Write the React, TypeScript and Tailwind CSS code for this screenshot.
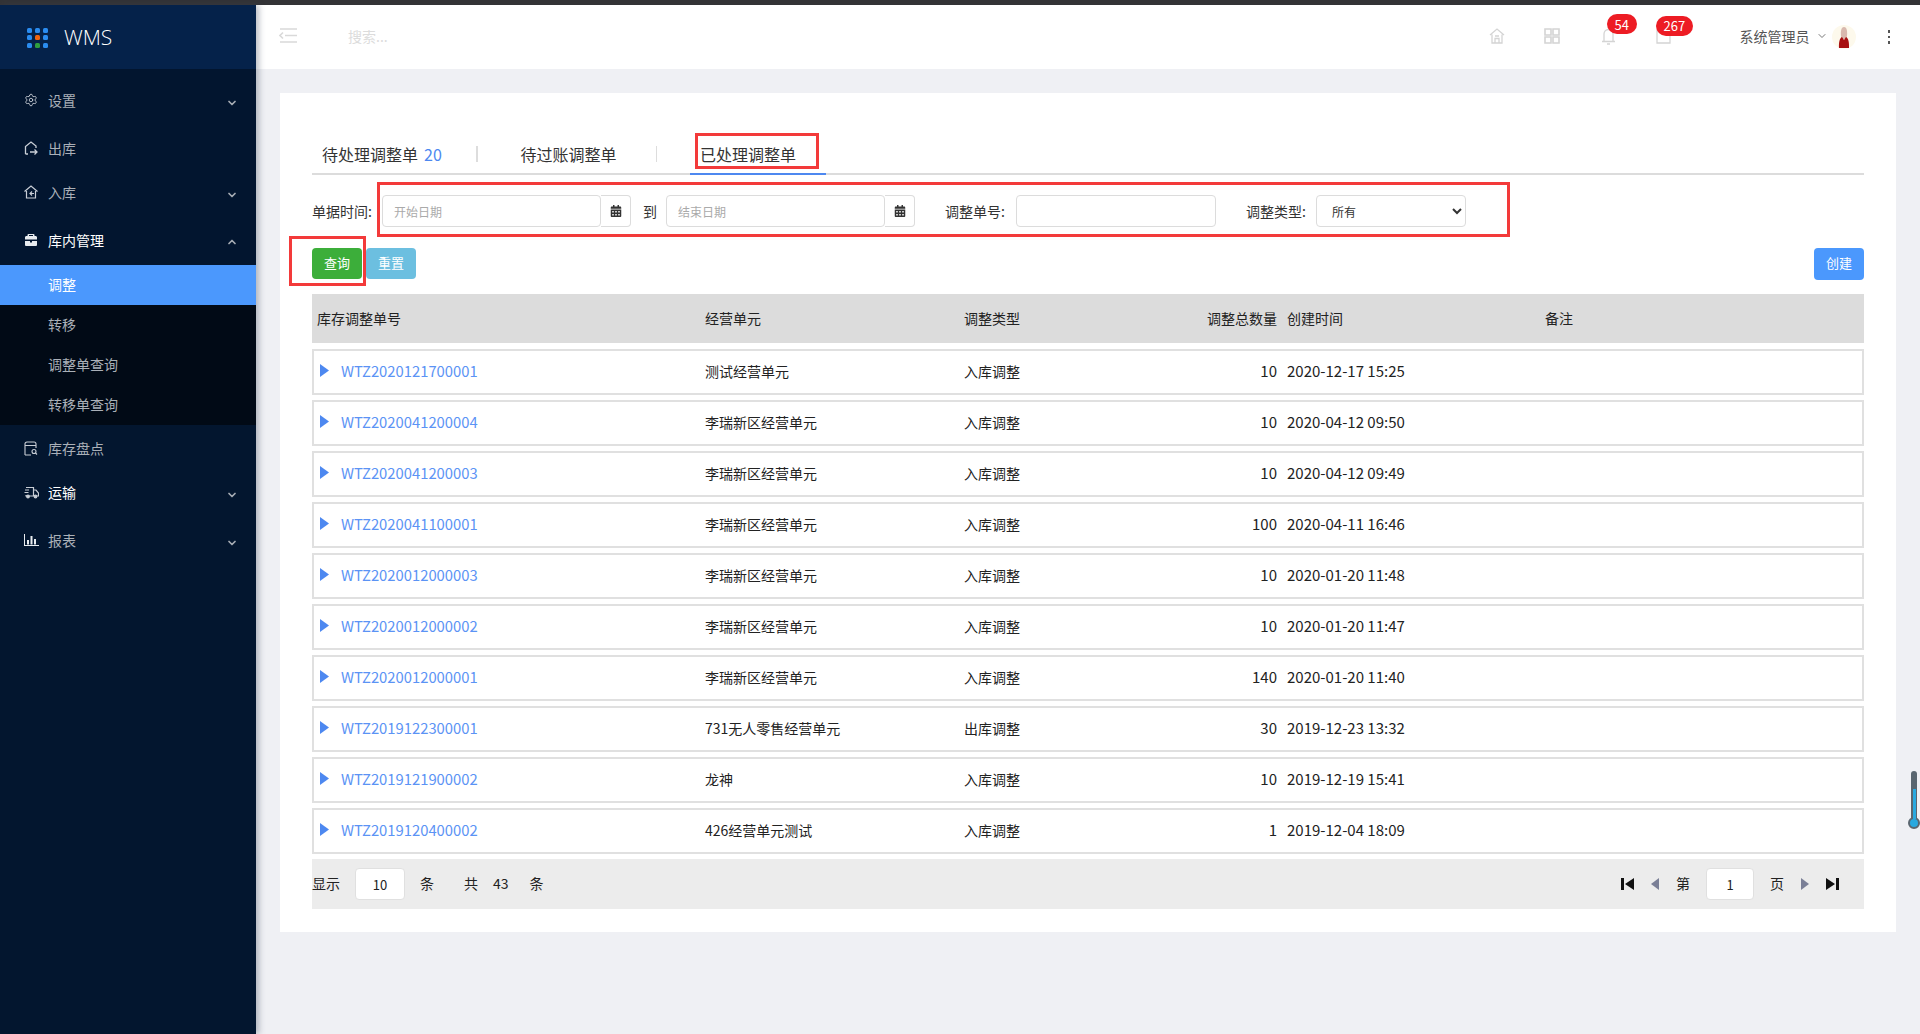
import { ChevronDown, ChevronUp, Settings } from "lucide-react";
import { FaCalendarAlt } from "react-icons/fa";

const font = "font-['Noto_Sans_CJK_SC','Noto_Sans',sans-serif]";

type Row = { no: string; unit: string; type: string; qty: number; time: string };

const rows: Row[] = [
  { no: "WTZ2020121700001", unit: "测试经营单元", type: "入库调整", qty: 10, time: "2020-12-17 15:25" },
  { no: "WTZ2020041200004", unit: "李瑞新区经营单元", type: "入库调整", qty: 10, time: "2020-04-12 09:50" },
  { no: "WTZ2020041200003", unit: "李瑞新区经营单元", type: "入库调整", qty: 10, time: "2020-04-12 09:49" },
  { no: "WTZ2020041100001", unit: "李瑞新区经营单元", type: "入库调整", qty: 100, time: "2020-04-11 16:46" },
  { no: "WTZ2020012000003", unit: "李瑞新区经营单元", type: "入库调整", qty: 10, time: "2020-01-20 11:48" },
  { no: "WTZ2020012000002", unit: "李瑞新区经营单元", type: "入库调整", qty: 10, time: "2020-01-20 11:47" },
  { no: "WTZ2020012000001", unit: "李瑞新区经营单元", type: "入库调整", qty: 140, time: "2020-01-20 11:40" },
  { no: "WTZ2019122300001", unit: "731无人零售经营单元", type: "出库调整", qty: 30, time: "2019-12-23 13:32" },
  { no: "WTZ2019121900002", unit: "龙神", type: "入库调整", qty: 10, time: "2019-12-19 15:41" },
  { no: "WTZ2019120400002", unit: "426经营单元测试", type: "入库调整", qty: 1, time: "2019-12-04 18:09" },
];

function OutIcon() {
  return (
    <svg width="14" height="14" viewBox="0 0 14 14" fill="none" stroke="#c9ced6" strokeWidth="1.3">
      <path d="M1.5 13V5.5L7 1l5 4v2M1.5 13H4" />
      <path d="M6 11h7M10.5 8.5 13 11l-2.5 2.5" />
    </svg>
  );
}

function InIcon() {
  return (
    <svg width="14" height="14" viewBox="0 0 14 14" fill="none" stroke="#c9ced6" strokeWidth="1.2">
      <path d="M.5 6.5 7 1l6.500 5.500M2.500 6v7h9V6" />
      <path d="M10 8.500H6M8 6.500l-2 2 2 2" />
    </svg>
  );
}

function CaseIcon() {
  return (
    <svg width="14" height="14" viewBox="0 0 14 14" fill="#e8ebef">
      <path d="M4.500 1h5a1 1 0 0 1 1 1v1H12a2 2 0 0 1 1 1v2.500H1V4a2 2 0 0 1 1-1h1.500V2a1 1 0 0 1 1-1Zm.5 1v1h4V2H5Z" />
      <path d="M1 8h12v4a1 1 0 0 1-1 1H2a1 1 0 0 1-1-1V8Zm5 0v1.500h2V8H6Z" />
    </svg>
  );
}

function CheckIcon() {
  return (
    <svg width="14" height="15" viewBox="0 0 14 15" fill="none" stroke="#c9ced6" strokeWidth="1.1">
      <path d="M1 14V3a2 2 0 0 1 2-2h7a2 2 0 0 1 2 2v4M1 14h6M1 4.500h11" />
      <circle cx="10" cy="10.500" r="2" />
      <path d="m11.500 12 1.500 1.500" />
    </svg>
  );
}

function TruckIcon() {
  return (
    <svg width="15" height="13" viewBox="0 0 15 13" fill="none" stroke="#c9ced6" strokeWidth="1.2">
      <path d="M2 1.500h7.500V10H5M1 4h4M.5 6.500h4M2 9v1h1M9.500 4H12l2.500 3v3H13" />
      <circle cx="4" cy="10.500" r="1.300" fill="#c9ced6" />
      <circle cx="11.500" cy="10.500" r="1.300" fill="#c9ced6" />
    </svg>
  );
}

function BarIcon() {
  return (
    <svg width="15" height="12" viewBox="0 0 15 12" fill="#e8ebef">
      <path d="M0 0h1v11h14v1H0V0Zm3 6h2v4.500H3V6Zm3.500-4h2v8.500h-2V2Zm3.500 3h2v5.500h-2V5Z" />
    </svg>
  );
}

function Logo() {
  const dots = ["bg-[#2a8cf0]", "bg-[#2a8cf0]", "bg-[#2a8cf0]", "bg-[#2a8cf0]", "bg-[#f0640f]", "bg-[#2a8cf0]", "bg-[#2a8cf0]", "bg-[#2f9e3e]", "bg-[#2a8cf0]"];
  return (
    <div className="grid grid-cols-[5px_5px_5px] gap-x-[3px] gap-y-[2.500px]">
      {dots.map((c, i) => (
        <div key={i} className={`h-[5px] w-[5px] rounded-[1.500px] ${c}`} />
      ))}
    </div>
  );
}

function NavItem({ icon, label, h, arrow, bright }: { icon: React.ReactNode; label: string; h: string; arrow?: "up" | "down"; bright?: boolean }) {
  return (
    <div className={`flex items-center pb-[2px] pl-[24px] pr-[18px] text-sm ${h} ${bright ? "text-white" : "text-[#aab0b8]"}`}>
      <span className="flex w-[24px] shrink-0 items-center">{icon}</span>
      <span className="flex-1">{label}</span>
      {arrow === "down" && <ChevronDown size={12} strokeWidth={3.500} className="mt-[6px] text-[#a5abb3]" />}
      {arrow === "up" && <ChevronUp size={12} strokeWidth={3.500} className="mt-[4px] text-[#a5abb3]" />}
    </div>
  );
}

function Sidebar() {
  return (
    <aside className="z-10 flex w-64 shrink-0 flex-col bg-[#02152f] shadow-[3px_0_6px_rgba(60,70,90,0.35)]">
      <div className="flex h-[64px] items-center gap-[16px] bg-[#05224a] pl-[27px] pt-[1px]">
        <Logo />
        <span className="font-['Open_Sans',sans-serif] text-[21px] leading-none font-light text-white">WMS</span>
      </div>
      <div className="pt-[8px]">
        <NavItem icon={<Settings size={14} strokeWidth={1.500} className="text-[#c9ced6]" />} label="设置" h="h-[48px]" arrow="down" />
        <NavItem icon={<OutIcon />} label="出库" h="h-[44px] pt-[4px]" />
        <NavItem icon={<InIcon />} label="入库" h="h-[48px]" arrow="down" />
        <NavItem icon={<CaseIcon />} label="库内管理" h="h-[48px]" arrow="up" bright />
      </div>
      <div className="bg-[#010a16] text-sm text-[#aab0b8]">
        <div className="flex h-[40px] items-center bg-[#4b98fd] pb-[2px] pl-[48px] text-white">调整</div>
        <div className="flex h-[40px] items-center pb-[2px] pl-[48px]">转移</div>
        <div className="flex h-[40px] items-center pb-[2px] pl-[48px]">调整单查询</div>
        <div className="flex h-[40px] items-center pb-[2px] pl-[48px]">转移单查询</div>
      </div>
      <div className="flex-1 bg-[#03162f]">
        <NavItem icon={<CheckIcon />} label="库存盘点" h="h-[48px]" />
        <NavItem icon={<TruckIcon />} label="运输" h="h-[44px] -mt-[2px]" arrow="down" bright />
        <NavItem icon={<BarIcon />} label="报表" h="h-[48px] mt-[2px]" arrow="down" />
      </div>
    </aside>
  );
}

function Badge({ text, left }: { text: string; left: string }) {
  return (
    <span className={`absolute -top-[14px] flex h-[20px] items-center rounded-full bg-[#ed1c24] px-[8px] text-[13px] leading-none text-white ${left}`}>
      {text}
    </span>
  );
}

function TopBar() {
  return (
    <header className="flex h-[64px] shrink-0 items-center bg-white pl-[23px] text-sm">
      <svg width="18" height="15" viewBox="0 0 18 15" fill="none" stroke="#d9d9d9" strokeWidth="1.600" className="-mt-[3px]">
        <path d="M1 1h17M6 7.500h12M1 14h17M4 4.500 1 7.500l3 3" />
      </svg>
      <span className="ml-[51px] pb-[2px] text-[#dcdcdc]">搜索...</span>
      <div className="ml-auto flex items-center">
        <svg width="16" height="16" viewBox="0 0 16 16" fill="none" stroke="#d4d4d4" strokeWidth="1.300" className="-mt-[2px]">
          <path d="M1 7 8 1l7 6M3 6.500V15h10V6.500M6 15v-4.500h4V15M6 8h4" />
        </svg>
        <svg width="16" height="16" viewBox="0 0 16 16" fill="none" stroke="#d4d4d4" strokeWidth="1.600" className="ml-[39px] -mt-[2px]">
          <path d="M1 1h6v6H1zM9 1h6v6H9zM1 9h6v6H1zM9 9h6v6H9z" />
        </svg>
        <div className="relative ml-[41px] -mt-[1px]">
          <svg width="15" height="17" viewBox="0 0 15 17" fill="none" stroke="#d4d4d4" strokeWidth="1.300">
            <path d="M3 13V6a4.500 4.500 0 0 1 9 0v7M1 13.500h13M6 16h3" />
          </svg>
          <Badge text="54" left="left-[6px]" />
        </div>
        <div className="relative ml-[40px] -mt-[1px]">
          <svg width="15" height="14" viewBox="0 0 15 14" fill="none" stroke="#d4d4d4" strokeWidth="1.300">
            <path d="M1 1h13v12H1z" />
          </svg>
          <Badge text="267" left="left-0" />
        </div>
        <span className="ml-[69px] pb-[2px] text-[#555]">系统管理员</span>
        <ChevronDown size={12} className="ml-[6px] -mt-[2px] text-[#777]" />
        <svg width="24" height="24" viewBox="0 0 24 24" className="ml-[4px] -mt-[1px]">
          <circle cx="12" cy="12" r="12" fill="#fdf9ec" />
          <path d="M9 11c-.5-4 0-9 3-9s3.500 5 3 9l-1 3h-4Z" fill="#d9b9ae" />
          <path d="M7 23c-.3-5 .5-10 3-11l2 3 2-3c2.500 1 3.300 6 3 11Z" fill="#a81010" />
        </svg>
        <div className="ml-[32px] mr-[30px] flex flex-col gap-[3px]">
          <span className="h-[2.500px] w-[2.500px] bg-[#555]" />
          <span className="h-[2.500px] w-[2.500px] bg-[#555]" />
          <span className="h-[2.500px] w-[2.500px] bg-[#555]" />
        </div>
      </div>
    </header>
  );
}

function Tabs() {
  return (
    <div className="flex h-[40px] items-center border-b-2 border-[#dcdcdc] text-base text-[#333]">
      <span className="ml-[10px] flex w-[154px] items-center pb-[1px]">
        待处理调整单<span className="ml-[6px] text-[#4d88f0]">20</span>
      </span>
      <span className="h-[16px] w-[1.500px] bg-[#ddd]" />
      <span className="ml-[43px] w-[135px] pb-[1px]">待过账调整单</span>
      <span className="h-[16px] w-[1.500px] bg-[#ddd]" />
      <span className="relative -mb-[2px] ml-[33px] flex h-[40px] w-[136px] items-center border-b-2 border-[#4d88f0] pb-[1px] pl-[10px]">
        已处理调整单
        <span className="absolute left-[5px] -top-[2px] h-[36px] w-[124px] border-[3px] border-[#f33a3a]" />
      </span>
    </div>
  );
}

const fieldBox = "h-[32px] rounded border border-[#dcdcdc] bg-white px-[11px] text-xs outline-none placeholder:text-[#aaa]";

function DateField({ placeholder }: { placeholder: string }) {
  return (
    <div className="flex items-center">
      <input placeholder={placeholder} className={`${fieldBox} w-[219px]`} />
      <span className="flex h-[32px] w-[30px] items-center justify-center rounded-r border border-l-0 border-[#dcdcdc] text-[#333]">
        <FaCalendarAlt size={12} />
      </span>
    </div>
  );
}

function Filters() {
  return (
    <div className="relative mt-[20px] flex h-[32px] items-center text-sm text-[#333]">
      <span className="w-[70px] pb-[1px]">单据时间:</span>
      <DateField placeholder="开始日期" />
      <span className="ml-[12px] w-[23px] pb-[1px]">到</span>
      <DateField placeholder="结束日期" />
      <span className="ml-[30px] w-[71px] pb-[1px]">调整单号:</span>
      <input className={`${fieldBox} w-[200px]`} />
      <span className="ml-[30px] w-[70px] pb-[1px]">调整类型:</span>
      <select className={`${fieldBox} w-[150px]`} defaultValue="所有">
        <option>所有</option>
      </select>
      <span className="absolute -top-[13px] left-[65px] h-[55px] w-[1133px] border-[3px] border-[#f33a3a]" />
    </div>
  );
}

function Actions() {
  return (
    <div className="mt-[21px] flex h-[32px] items-start text-[13px] text-white">
      <div className="relative">
        <button className="h-[31px] w-[50px] rounded bg-[#3cae3a] pb-[2px]">查询</button>
        <span className="absolute -top-[12px] -left-[23px] h-[50px] w-[77px] border-[3px] border-[#f33a3a]" />
      </div>
      <button className="ml-[4px] h-[31px] w-[50px] rounded bg-[#6cbfe0] pb-[2px]">重置</button>
      <button className="ml-auto h-[32px] w-[50px] rounded bg-[#4b98fd] pb-[2px]">创建</button>
    </div>
  );
}

const cols = "grid grid-cols-[388px_259px_200px_113px_268px_1fr] items-center";

function Table() {
  return (
    <div className="text-sm text-[#222]">
      <div className={`${cols} mt-[14px] h-[49px] bg-[#dcdcdc] pb-[2px] pl-[5px]`}>
        <span>库存调整单号</span>
        <span>经营单元</span>
        <span>调整类型</span>
        <span className="text-right">调整总数量</span>
        <span className="pl-[10px]">创建时间</span>
        <span>备注</span>
      </div>
      <div className="mt-[6px] flex flex-col gap-[5px]">
        {rows.map((r) => (
          <div key={r.no} className={`${cols} h-[46px] border-2 border-[#e0e0e0] pb-[3px] pl-[3px]`}>
            <span className="flex items-center">
              <svg width="9" height="13" viewBox="0 0 9 13" fill="#4d88f0" className="ml-[3px] shrink-0">
                <path d="M0 0l9 6.500-9 6.500z" />
              </svg>
              <span className="ml-[12px] text-[14.800px] text-[#5b93f5]">{r.no}</span>
            </span>
            <span>{r.unit}</span>
            <span>{r.type}</span>
            <span className="text-right text-[15px]">{r.qty}</span>
            <span className="pl-[10px] text-[15px]">{r.time}</span>
            <span />
          </div>
        ))}
      </div>
    </div>
  );
}

function Footer() {
  return (
    <div className="mt-[5px] flex h-[50px] items-center bg-[#ececec] text-sm text-[#222]">
      <span className="pb-[3px]">显示</span>
      <input defaultValue="10" className="ml-[15px] h-[32px] w-[50px] rounded border border-[#e0e0e0] bg-white text-center text-[13px] outline-none" />
      <span className="ml-[15px] pb-[3px]">条</span>
      <span className="ml-[30px] pb-[3px]">共</span>
      <span className="ml-[15px] pb-[3px]">43</span>
      <span className="ml-[21px] pb-[3px]">条</span>
      <div className="ml-auto mr-[25px] flex items-center">
        <svg width="13" height="12" viewBox="0 0 13 12" fill="#111">
          <path d="M0 0h3v12H0zM13 0v12L4 6z" />
        </svg>
        <svg width="8" height="12" viewBox="0 0 8 12" fill="#7a7f96" className="ml-[17px]">
          <path d="M8 0v12L0 6z" />
        </svg>
        <span className="ml-[17px] pb-[3px]">第</span>
        <input defaultValue="1" className="ml-[16px] h-[32px] w-[48px] rounded border border-[#e0e0e0] bg-white text-center text-[13px] outline-none" />
        <span className="ml-[16px] pb-[3px]">页</span>
        <svg width="8" height="12" viewBox="0 0 8 12" fill="#7a7f96" className="ml-[17px]">
          <path d="M0 0v12l8-6z" />
        </svg>
        <svg width="13" height="12" viewBox="0 0 13 12" fill="#111" className="ml-[17px]">
          <path d="M13 0h-3v12h3zM0 0v12l9-6z" />
        </svg>
      </div>
    </div>
  );
}

function Thermometer() {
  return (
    <div className="absolute left-[1908px] top-[771px] flex flex-col items-center">
      <div className="relative h-[48px] w-[6px] rounded-t-full bg-[#5a6670]">
        <div className="absolute bottom-0 left-[1.500px] h-[30px] w-[3px] bg-[#29a9e0]" />
      </div>
      <div className="-mt-[2px] h-[12px] w-[12px] rounded-full border-2 border-[#5a6670] bg-[#29a9e0]" />
    </div>
  );
}

export default function App() {
  return (
    <div className={`relative flex h-screen flex-col overflow-hidden bg-[#eff0f4] ${font}`}>
      <div className="h-[5px] shrink-0 bg-[#333336]" />
      <div className="flex min-h-0 flex-1">
        <Sidebar />
        <main className="min-w-0 flex-1">
          <TopBar />
          <div className="mx-[24px] mt-[24px] bg-white px-[32px] pt-[42px] pb-[23px]">
            <Tabs />
            <Filters />
            <Actions />
            <Table />
            <Footer />
          </div>
        </main>
      </div>
      <Thermometer />
    </div>
  );
}
